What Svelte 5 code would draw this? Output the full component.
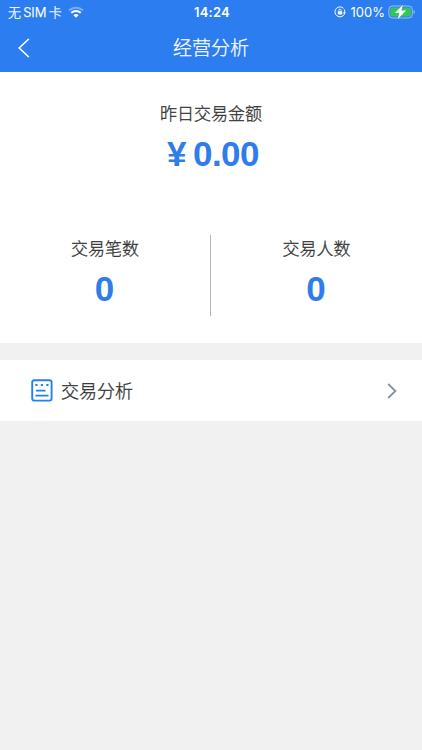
<script lang="ts">
    const stats = [
        {label: "交易笔数", value: "0"},
        {label: "交易人数", value: "0"}
    ];
</script>

<div class="page">
    <header>
        <div class="status">
            <div class="carrier">
                <span>无 SIM 卡</span>
                <svg class="wifi" viewBox="0 0 16 12" width="16" height="12">
                    <path d="M1 4.5a10 10 0 0 1 14 0" fill="none" stroke="#fff" stroke-opacity=".35" stroke-width="2"/>
                    <path d="M3.3 6.9a6.7 6.7 0 0 1 9.4 0" fill="none" stroke="#fff" stroke-width="2"/>
                    <path d="M8 11.8 5.4 9.2a3.8 3.8 0 0 1 5.2 0Z" fill="#fff"/>
                </svg>
            </div>
            <div class="time">14:24</div>
            <div class="power">
                <svg viewBox="0 0 12 12" width="12" height="12">
                    <path d="M9.5 2.3a5 5 0 1 0 .9 5.9M10.6 7.2a5 5 0 0 0-.4-3.8" fill="none" stroke="#fff" stroke-width="1"/>
                    <path d="M8.9 6.5h3l-1.6 2z" fill="#fff"/>
                    <rect x="3.8" y="5.3" width="4.4" height="3.3" rx=".5" fill="#fff"/>
                    <path d="M4.8 5.5V4.3a1.2 1.2 0 0 1 2.4 0v1.2" fill="none" stroke="#fff" stroke-width=".8"/>
                </svg>
                <span>100%</span>
                <svg viewBox="0 0 28 14" width="28" height="14">
                    <rect x=".9" y="1" width="23.4" height="12" rx="3.5" fill="none" stroke="#fff" stroke-opacity=".5"/>
                    <rect x="2.3" y="2.4" width="20.6" height="9.2" rx="2.2" fill="#35c65b"/>
                    <path d="M25.6 5v4q1.3-.5 1.3-2t-1.3-2" fill="#fff" fill-opacity=".5"/>
                    <path d="M14.8 0 6.8 7.9h4.6L9.8 14l8.4-8.4h-4.8z" fill="#fff"/>
                </svg>
            </div>
        </div>
        <div class="nav">
            <button class="back" aria-label="返回">
                <svg viewBox="0 0 12 20" width="12" height="20">
                    <path d="M10.8 1 1.2 10l9.6 9" fill="none" stroke="#fff" stroke-width="1.6"/>
                </svg>
            </button>
            <h1>经营分析</h1>
        </div>
    </header>

    <section class="summary">
        <div class="label">昨日交易金额</div>
        <div class="amount"><span class="yen">¥</span>0.00</div>
        <div class="stats">
            {#each stats as s}
                <div class="stat">
                    <div class="label">{s.label}</div>
                    <div class="value">{s.value}</div>
                </div>
            {/each}
        </div>
    </section>

    <button class="entry">
        <svg viewBox="0 0 22 23" width="22" height="23">
            <rect x="1.2" y="1.2" width="19.4" height="20.4" rx="2" fill="none" stroke="#2182ed" stroke-width="1.9"/>
            <path d="M4.3 6h2.2M9.8 6H12M15.3 6h2.2" stroke="#2182ed" stroke-width="2"/>
            <path d="M5 11.6h9.5M4.5 16.7h13" stroke="#2182ed" stroke-width="1.7"/>
        </svg>
        <span>交易分析</span>
        <svg class="arrow" viewBox="0 0 10 16" width="10" height="16">
            <path d="m1.2 1 7.2 7-7.2 7" fill="none" stroke="#87939b" stroke-width="1.8"/>
        </svg>
    </button>
</div>

<style>
    :global(body) {
        background: #f1f1f1;
    }

    .page {
        min-height: 750px;
        color: #333;
        font-family: "Liberation Sans", "Noto Sans CJK SC", sans-serif;
    }

    header {
        height: 72px;
        background: #2c7ef0;
        color: #fff;
    }

    .status {
        display: grid;
        grid-template-columns: 1fr auto 1fr;
        align-items: center;
        height: 24px;
        padding: 0 6px 0 8px;
        font-family: Inter, "Noto Sans CJK SC", sans-serif;
        font-size: 13px;
        line-height: 24px;
    }

    .carrier,
    .power {
        display: flex;
        align-items: center;
    }

    .carrier {
        gap: 6px;
    }

    .carrier span {
        font-weight: 300;
        word-spacing: -1.5px;
        -webkit-text-stroke: .25px;
    }

    .time {
        font-weight: 600;
        letter-spacing: .2px;
    }

    .power {
        justify-content: flex-end;
        gap: 5px;
    }

    .power span {
        margin-right: -2px;
    }

    .nav {
        display: grid;
        grid-template-columns: 48px 1fr 48px;
        align-items: center;
        height: 48px;
    }

    button {
        border: 0;
        padding: 0;
        background: none;
        color: inherit;
        font-family: inherit;
    }

    .back {
        display: flex;
        padding-left: 18px;
    }

    h1 {
        margin: 0;
        padding-top: 2px;
        font-size: 19px;
        font-weight: 300;
        line-height: 46px;
        text-align: center;
        -webkit-text-stroke: .25px;
    }

    .summary {
        box-sizing: border-box;
        height: 271px;
        padding-top: 30px;
        background: #fff;
        text-align: center;
    }

    .label {
        font-size: 17px;
        font-weight: 300;
        line-height: 26px;
        -webkit-text-stroke: .3px;
    }

    .amount,
    .value {
        color: #2f7deb;
        font-size: 35px;
        font-weight: 700;
        line-height: 40px;
    }

    .amount {
        margin-top: 6px;
        padding-left: 4px;
        letter-spacing: -.5px;
    }

    .yen {
        margin-right: 7px;
    }

    .stats {
        display: grid;
        grid-template-columns: 210px 1fr;
        margin-top: 61px;
    }

    .stat {
        box-sizing: border-box;
        height: 81px;
        padding-top: 2px;
    }

    .stat + .stat {
        border-left: 1px solid #b5b5b5;
    }

    .value {
        margin-top: 6px;
    }

    .stat .value {
        padding-right: 1px;
    }

    .entry {
        display: flex;
        align-items: center;
        box-sizing: border-box;
        width: 100%;
        height: 61px;
        margin-top: 17px;
        padding: 0 25px 0 31px;
        background: #fff;
        font-size: 18px;
    }

    .entry span {
        margin-left: 8px;
        padding-bottom: 2px;
        font-weight: 300;
        -webkit-text-stroke: .3px;
    }

    .arrow {
        margin-left: auto;
    }
</style>
